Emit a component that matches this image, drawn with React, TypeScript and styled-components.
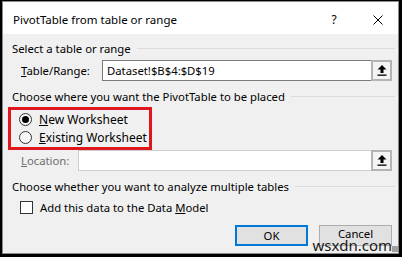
import React from "react";
import styled, { createGlobalStyle } from "styled-components";

const GlobalStyle = createGlobalStyle`
  html, body {
    margin: 0;
    padding: 0;
    background: #000;
  }
  * {
    box-sizing: border-box;
  }
`;

const Window = styled.div`
  position: relative;
  width: 402px;
  height: 257px;
  background: #000;
  padding: 1px 3px 3px 2px;
  font-family: "Noto Sans", "DejaVu Sans", sans-serif;
  font-size: 11.3px;
  color: #000;
`;

const Frame = styled.div`
  height: 100%;
  border: 1px solid #8a8a8a;
  display: flex;
  flex-direction: column;
  background: #f0f0f0;
`;

const TitleBar = styled.div`
  height: 32px;
  background: #fff;
  display: flex;
  align-items: center;
  padding-left: 10px;
  padding-top: 3px;
`;

const Title = styled.div`
  flex: 1;
  font-size: 11.5px;
`;

const TitleButton = styled.div<{ $w: number }>`
  width: ${(p) => p.$w}px;
  display: flex;
  align-items: center;
  justify-content: center;
  font-size: 12px;
`;

const Body = styled.div`
  flex: 1;
  display: flex;
  flex-direction: column;
  padding: 4px 3px 0 9px;
`;

const GroupHeader = styled.div<{ $mt?: number }>`
  height: 20px;
  margin-top: ${(p) => p.$mt || 0}px;
  display: flex;
  align-items: center;
  gap: 6px;
  white-space: nowrap;
  &::after {
    content: "";
    flex: 1;
    height: 1px;
    background: #dcdcdc;
  }
`;

const FieldRow = styled.div<{ $mt?: number }>`
  height: 21px;
  margin-top: ${(p) => p.$mt || 0}px;
  margin-right: 3px;
  padding-left: 9px;
  display: flex;
  align-items: center;
`;

const FieldLabel = styled.div<{ $w: number; $disabled?: boolean }>`
  width: ${(p) => p.$w}px;
  color: ${(p) => (p.$disabled ? "#6d6d6d" : "#000")};
`;

const Input = styled.div<{ $disabled?: boolean }>`
  flex: 1;
  height: 100%;
  background: #fff;
  border: 1px solid ${(p) => (p.$disabled ? "#cfcfcf" : "#7a7a7a")};
  border-right: none;
  display: flex;
  align-items: center;
  padding-left: 4px;
`;

const PickButton = styled.div`
  width: 21px;
  height: 100%;
  border: 2px solid #b4b4b4;
  background: #f4f4f4;
  display: flex;
  align-items: center;
  justify-content: center;
`;

const Highlight = styled.div`
  width: 144px;
  height: 43px;
  margin: 1px 0 0 -4px;
  border: 3px solid #e0161d;
  display: flex;
  flex-direction: column;
  padding-left: 8px;
`;

const Choice = styled.div`
  height: 19px;
  display: flex;
  align-items: center;
  gap: 7px;
  font-size: 12px;
`;

const Radio = styled.span<{ $checked?: boolean }>`
  width: 13px;
  height: 13px;
  border-radius: 50%;
  border: 1px solid #333;
  background: #f7f7f7;
  display: flex;
  align-items: center;
  justify-content: center;
  &::after {
    content: "";
    width: 7px;
    height: 7px;
    border-radius: 50%;
    background: ${(p) => (p.$checked ? "#000" : "transparent")};
  }
`;

const CheckRow = styled.div`
  height: 20px;
  margin-top: 1px;
  padding-left: 8px;
  display: flex;
  align-items: center;
  gap: 7px;
`;

const Checkbox = styled.span`
  width: 13px;
  height: 13px;
  border: 1px solid #333;
  background: #fff;
`;

const Footer = styled.div`
  margin-top: 8px;
  margin-right: 3px;
  display: flex;
  justify-content: flex-end;
  gap: 11px;
`;

const Button = styled.div<{ $primary?: boolean }>`
  width: 73px;
  height: 21px;
  background: #e1e1e1;
  border: ${(p) => (p.$primary ? "2px solid #0078d7" : "1px solid #adadad")};
  display: flex;
  align-items: ${(p) => (p.$primary ? "center" : "flex-start")};
  justify-content: center;
  line-height: 14px;
  padding-top: ${(p) => (p.$primary ? 0 : 1)}px;
`;

const Watermark = styled.div`
  position: absolute;
  right: 10px;
  bottom: 4px;
  font-size: 15px;
  line-height: 16px;
  color: #1a1a1a;
`;

const Grip = styled.div`
  position: absolute;
  right: 4px;
  bottom: 5px;
  width: 6px;
  height: 6px;
  background-image: radial-gradient(circle, #a0a0a0 0.8px, transparent 1px);
  background-size: 2px 2px;
`;

const Key = styled.span`
  text-decoration: underline;
  text-underline-offset: 1px;
`;

function UpArrow() {
  return (
    <svg width="10" height="11" viewBox="0 0 10 11">
      <path d="M5 0 L9.5 4.5 L6.5 4.5 L6.5 8 L3.5 8 L3.5 4.5 L0.5 4.5 Z" fill="#000" />
      <rect x="0.5" y="9.5" width="9" height="1.3" fill="#000" />
    </svg>
  );
}

function CloseIcon() {
  return (
    <svg width="10" height="10" viewBox="0 0 10 10">
      <path d="M0.5 0.5 L9.5 9.5 M9.5 0.5 L0.5 9.5" stroke="#000" strokeWidth="1" />
    </svg>
  );
}

export default function App() {
  return (
    <Window>
      <GlobalStyle />
      <Frame>
        <TitleBar>
          <Title>PivotTable from table or range</Title>
          <TitleButton $w={48}>?</TitleButton>
          <TitleButton $w={40}>
            <CloseIcon />
          </TitleButton>
        </TitleBar>
        <Body>
          <GroupHeader>Select a table or range</GroupHeader>
          <FieldRow $mt={2}>
            <FieldLabel $w={81}>
              <Key>T</Key>able/Range:
            </FieldLabel>
            <Input>Dataset!$B$4:$D$19</Input>
            <PickButton>
              <UpArrow />
            </PickButton>
          </FieldRow>
          <GroupHeader $mt={5}>Choose where you want the PivotTable to be placed</GroupHeader>
          <Highlight>
            <Choice>
              <Radio $checked />
              <span>
                <Key>N</Key>ew Worksheet
              </span>
            </Choice>
            <Choice>
              <Radio />
              <span>
                <Key>E</Key>xisting Worksheet
              </span>
            </Choice>
          </Highlight>
          <FieldRow>
            <FieldLabel $w={57} $disabled>
              <Key>L</Key>ocation:
            </FieldLabel>
            <Input $disabled />
            <PickButton>
              <UpArrow />
            </PickButton>
          </FieldRow>
          <GroupHeader $mt={5}>Choose whether you want to analyze multiple tables</GroupHeader>
          <CheckRow>
            <Checkbox />
            <span>
              Add this data to the Data <Key>M</Key>odel
            </span>
          </CheckRow>
          <Footer>
            <Button $primary>OK</Button>
            <Button>Cancel</Button>
          </Footer>
        </Body>
      </Frame>
      <Watermark>wsxdn.com</Watermark>
      <Grip />
    </Window>
  );
}
